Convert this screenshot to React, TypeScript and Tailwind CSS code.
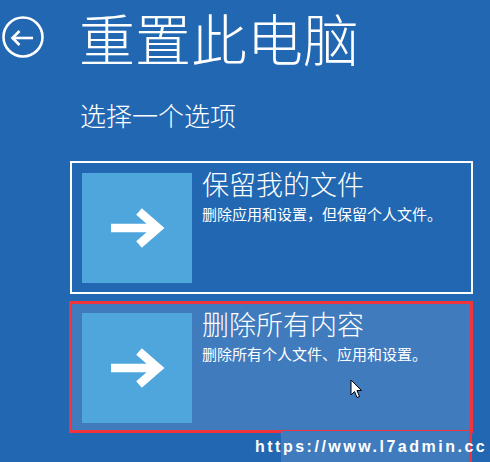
import type { ReactNode } from 'react';

const cjk = { fontFamily: '"Noto Sans CJK SC", "Noto Sans", sans-serif' };

const ArrowTile = () => (
  <div className="w-[110px] h-[110px] shrink-0 bg-[#4ea6dc]">
    <svg width="110" height="110" viewBox="0 0 110 110">
      <line x1="29" y1="55" x2="76" y2="55" stroke="#fff" strokeWidth="8.5" />
      <polyline
        points="57,38.5 76,55 57,71.5"
        fill="none"
        stroke="#fff"
        strokeWidth="8.5"
        strokeLinejoin="miter"
      />
    </svg>
  </div>
);

interface OptionProps {
  title: string;
  desc: string;
  className: string;
  children?: ReactNode;
}

const Option = ({ title, desc, className }: OptionProps) => (
  <div className={`flex ${className}`}>
    <ArrowTile />
    <div className="ml-[10px] -mt-[4px] flex flex-col text-white" style={cjk}>
      <p className="text-[27px] leading-[30px] font-light">{title}</p>
      <p className="mt-[6px] text-[15px] leading-[17px]">{desc}</p>
    </div>
  </div>
);

const App = () => {
  return (
    <div className="relative w-[490px] h-[462px] overflow-hidden bg-[#2167b2] flex">
      <div className="w-[70px] shrink-0">
        <svg width="44" height="44" viewBox="0 0 44 44" className="ml-[1px] mt-[15px]">
          <circle cx="22" cy="22" r="19.5" fill="none" stroke="#fff" strokeWidth="2.6" />
          <line x1="11.5" y1="23" x2="32" y2="23" stroke="#fff" strokeWidth="2.6" />
          <polyline points="18.5,16 11.5,23 18.5,30" fill="none" stroke="#fff" strokeWidth="2.6" />
        </svg>
      </div>

      <div className="w-[403px] flex flex-col">
        <h1 className="mt-[1px] pl-[9px] text-[56px] leading-[72px] font-light text-white" style={cjk}>
          重置此电脑
        </h1>
        <p className="mt-[27px] pl-[10px] text-[26px] leading-[30px] font-light text-white" style={cjk}>
          选择一个选项
        </p>

        <Option
          title="保留我的文件"
          desc="删除应用和设置，但保留个人文件。"
          className="mt-[31px] border-2 border-white pt-[10px] pb-[9px] px-[10px]"
        />
        <Option
          title="删除所有内容"
          desc="删除所有个人文件、应用和设置。"
          className="mt-[7px] -ml-[1px] border-[3px] border-[#f0343c] bg-[#3f7bbd] pt-[9px] pb-[7px] pl-[10px] pr-[10px]"
        />
      </div>

      {/* pasted watermark strip */}
      <div className="absolute left-[281px] top-[431px] w-[191px] h-[31px] bg-[#3f7bbd] border-r-[3px] border-[#f0343c]" />
      <p
        className="absolute left-[255px] top-[439px] text-[16px] leading-none font-bold tracking-[2.5px] text-white"
        style={{ fontFamily: '"Liberation Sans", Arial, sans-serif' }}
      >
        https://www.l7admin.cc
      </p>

      {/* mouse pointer */}
      <svg width="14" height="22" viewBox="0 0 14 22" className="absolute left-[350px] top-[379px]">
        <path
          d="M1 1 L1 16 L4.5 12.5 L7 18.5 L9.5 17.5 L7 11.5 L11.5 11.5 Z"
          fill="#fff"
          stroke="#000"
          strokeWidth="1"
          strokeLinejoin="miter"
        />
      </svg>
    </div>
  );
};

export default App;
